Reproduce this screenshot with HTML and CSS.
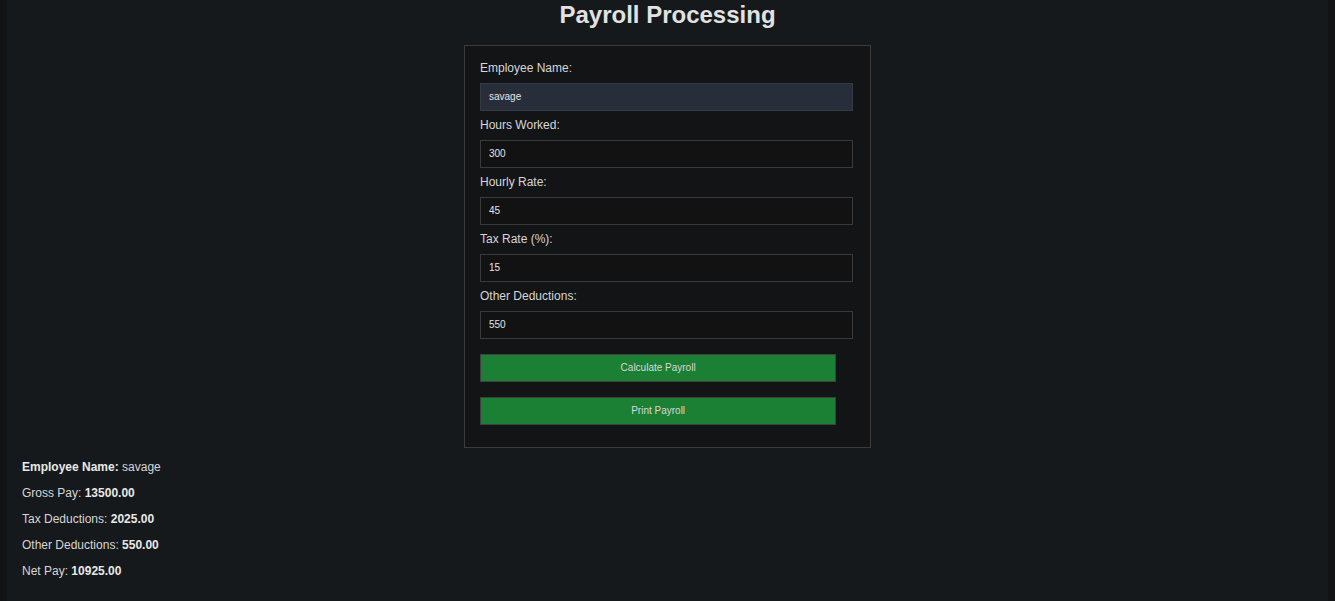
FILE: index.html
```html
<!DOCTYPE html>
<html lang="en">
<head>
<meta charset="utf-8">
<title>Payroll Processing</title>
<link rel="stylesheet" href="styles.css">
</head>
<body>
<main class="page">
  <h1 class="title">Payroll Processing</h1>
  <form class="card">
    <label class="field-label" for="name">Employee Name:</label>
    <input class="field field-active" id="name" type="text" value="savage">
    <label class="field-label" for="hours">Hours Worked:</label>
    <input class="field" id="hours" type="text" value="300">
    <label class="field-label" for="rate">Hourly Rate:</label>
    <input class="field" id="rate" type="text" value="45">
    <label class="field-label" for="tax">Tax Rate (%):</label>
    <input class="field" id="tax" type="text" value="15">
    <label class="field-label" for="other">Other Deductions:</label>
    <input class="field" id="other" type="text" value="550">
    <div class="actions">
      <button class="btn" type="button">Calculate Payroll</button>
      <button class="btn" type="button">Print Payroll</button>
    </div>
  </form>
  <section class="results">
    <p class="result-line"><strong>Employee Name:</strong> savage</p>
    <p class="result-line">Gross Pay: <strong>13500.00</strong></p>
    <p class="result-line">Tax Deductions: <strong>2025.00</strong></p>
    <p class="result-line">Other Deductions: <strong>550.00</strong></p>
    <p class="result-line">Net Pay: <strong>10925.00</strong></p>
  </section>
</main>
</body>
</html>
```

FILE: styles.css
```css
html {
  background: #111315;
  height: 100%;
}

body {
  margin: 0 7px;
  min-height: 100%;
  background: #16191b;
  font-family: "Liberation Sans", Arial, sans-serif;
  color: #d6d6d6;
}

.page {
  padding: 1px 15px 10px;
}

.title {
  margin: 0;
  font-size: 24px;
  line-height: 28px;
  font-weight: bold;
  text-align: center;
  color: #e2e2e2;
}

.card {
  width: 375px;
  margin: 16px auto 0;
  padding: 15px;
  background: #131416;
  border: 1px solid #3b3b3b;
}

.field-label {
  display: block;
  font-size: 12px;
  line-height: 14px;
  margin-bottom: 8px;
  color: #d6d6d6;
}

.field {
  display: block;
  box-sizing: border-box;
  width: 373px;
  height: 28px;
  margin: 0 0 7px;
  padding: 0 8px 2px;
  font-family: "Liberation Sans", Arial, sans-serif;
  font-size: 10px;
  color: #e4e4e4;
  background: #121212;
  border: 1px solid #3a3a3a;
  border-radius: 0;
  outline: none;
}

.field-active {
  background: #272e3a;
  border-color: #353b45;
}

.actions {
  padding-top: 8px;
  padding-bottom: 7px;
}

.btn {
  display: block;
  box-sizing: border-box;
  width: 95%;
  height: 28px;
  margin: 0;
  padding: 0 0 2px;
  font-family: "Liberation Sans", Arial, sans-serif;
  font-size: 10px;
  color: #d8d8d8;
  background: #1b7f34;
  border: 1px solid #3f3f3f;
  border-radius: 0;
}

.btn + .btn {
  margin-top: 15px;
}

.results {
  margin-top: 12px;
}

.result-line {
  margin: 0 0 12px;
  font-size: 12px;
  line-height: 14px;
  color: #d6d6d6;
}

.result-line strong {
  color: #e8e8e8;
}
```
